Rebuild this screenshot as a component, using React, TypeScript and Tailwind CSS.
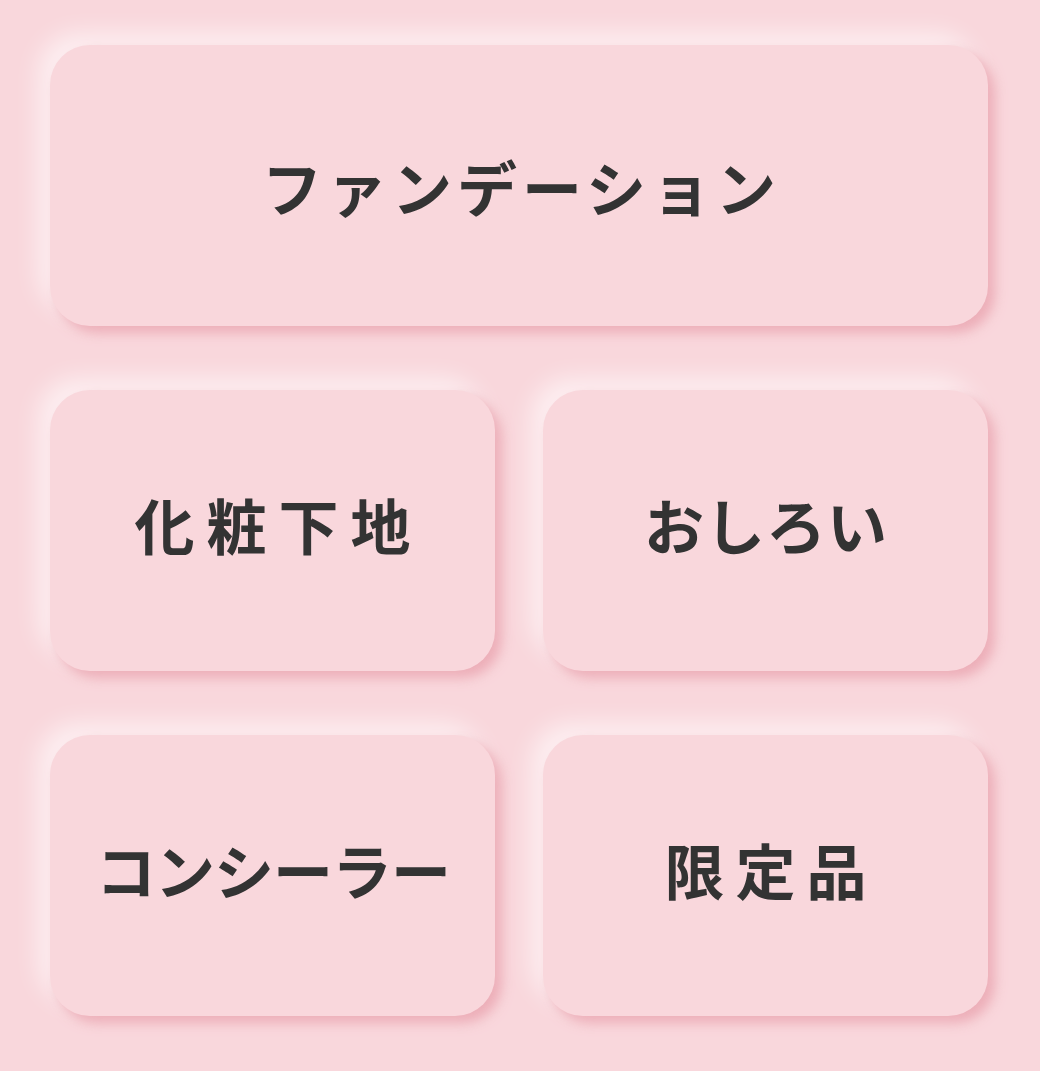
const items = [
  { label: "化粧下地", spacing: "tracking-[12px] pl-[12px]" },
  { label: "おしろい", spacing: "tracking-[1px] pl-[1px]" },
  { label: "コンシーラー", spacing: "tracking-[-1px] mr-[-1px]" },
  { label: "限定品", spacing: "tracking-[11px] pl-[11px]" },
];

function Tile({
  label,
  spacing,
  wide = false,
}: {
  label: string;
  spacing: string;
  wide?: boolean;
}) {
  return (
    <button
      className={`${
        wide ? "col-span-2" : "pb-[14px]"
      } h-[281px] rounded-[40px] bg-[#f9d7dc] shadow-[7px_7px_12px_rgba(232,160,172,0.75),-12px_-12px_24px_rgba(255,255,255,0.6)] flex items-center justify-center`}
    >
      <span
        className={`${spacing} text-[60px] font-bold text-[#333333] leading-none font-['Noto_Sans_CJK_JP',sans-serif]`}
      >
        {label}
      </span>
    </button>
  );
}

export default function App() {
  return (
    <div className="min-h-[1071px] w-[1040px] bg-[#f9d7dc] pl-[50px] pr-[52px] pt-[45px] pb-[57px]">
      <div className="grid grid-cols-2 gap-x-[48px] gap-y-[64px]">
        <Tile label="ファンデーション" spacing="tracking-[5px] pl-[5px]" wide />
        {items.map((item) => (
          <Tile key={item.label} label={item.label} spacing={item.spacing} />
        ))}
      </div>
    </div>
  );
}
